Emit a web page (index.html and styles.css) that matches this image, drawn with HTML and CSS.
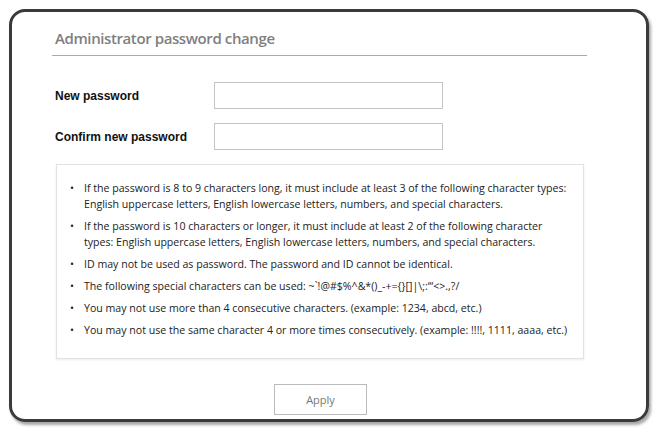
FILE: index.html
```html
<!DOCTYPE html>
<html>
<head>
<meta charset="utf-8">
<link rel="stylesheet" href="styles.css">
</head>
<body>
<div class="frame">
  <h1 class="title">Administrator password change</h1>
  <div class="form">
    <div class="row"><label class="lbl">New password</label><input class="field" type="password"></div>
    <div class="row"><label class="lbl">Confirm new password</label><input class="field" type="password"></div>
  </div>
  <div class="info">
    <ul class="rules">
      <li>If the password is 8 to 9 characters long, it must include at least 3 of the following character types: English uppercase letters, English lowercase letters, numbers, and special characters.</li>
      <li>If the password is 10 characters or longer, it must include at least 2 of the following character types: English uppercase letters, English lowercase letters, numbers, and special characters.</li>
      <li>ID may not be used as password. The password and ID cannot be identical.</li>
      <li>The following special characters can be used: ~`!@#$%^&amp;*()_-+={}[]|\;:‘“&lt;&gt;.,?/</li>
      <li>You may not use more than 4 consecutive characters. (example: 1234, abcd, etc.)</li>
      <li>You may not use the same character 4 or more times consecutively. (example: !!!!, 1111, aaaa, etc.)</li>
    </ul>
  </div>
  <div class="actions"><button class="apply">Apply</button></div>
</div>
</body>
</html>
```
FILE: styles.css
```css
html, body { margin: 0; padding: 0; background: #fff; }
body { width: 655px; height: 431px; overflow: hidden; padding: 9px 0 0 9px; box-sizing: border-box; }
.frame {
  width: 640px; height: 413px; box-sizing: border-box;
  border: 3px solid #3a3a3a; border-radius: 16px;
  box-shadow: 2px 3px 3px rgba(0,0,0,0.35);
  padding: 15px 0 0 40px;
  font-family: "Open Sans", sans-serif;
}
.title {
  margin: 0; width: 532px; font-weight: 600; font-size: 15px; color: #808080;
  line-height: 22px; padding: 0 0 6px 3px; border-bottom: 1px solid #aaa;
  letter-spacing: -0.4px;
}
.form { padding-top: 26px; display: flex; flex-direction: column; gap: 14px; }
.row { display: flex; align-items: center; }
.lbl { width: 159px; padding-left: 3px; font-family: "Liberation Sans", Arial, sans-serif; font-weight: bold; font-size: 12px; color: #111; }
.field { width: 229px; height: 27px; box-sizing: border-box; border: 1px solid #c4c4c4; margin: 0; padding: 0; background: #fff; }
.info {
  margin: 14px 0 0 4px; width: 528px; height: 195px; box-sizing: border-box;
  border: 1px solid #e2e2e2; box-shadow: 0 1px 2px rgba(0,0,0,0.08);
  padding: 15px 0 0 0;
}
.rules { margin: 0; padding: 0 0 0 27px; list-style: none; font-size: 10.6px; color: #222; line-height: 16px; }
.rules li { position: relative; margin-bottom: 6px; padding-right: 15px; }
.rules li::before { content: "•"; position: absolute; left: -14px; top: 0; }
.actions { display: flex; padding: 25px 0 0 222px; }
.apply {
  width: 93px; height: 31px; box-sizing: border-box; background: #fff; border: 1px solid #bbb;
  font-family: "Open Sans", sans-serif; font-size: 11px; color: #777; padding: 0;
}
```
